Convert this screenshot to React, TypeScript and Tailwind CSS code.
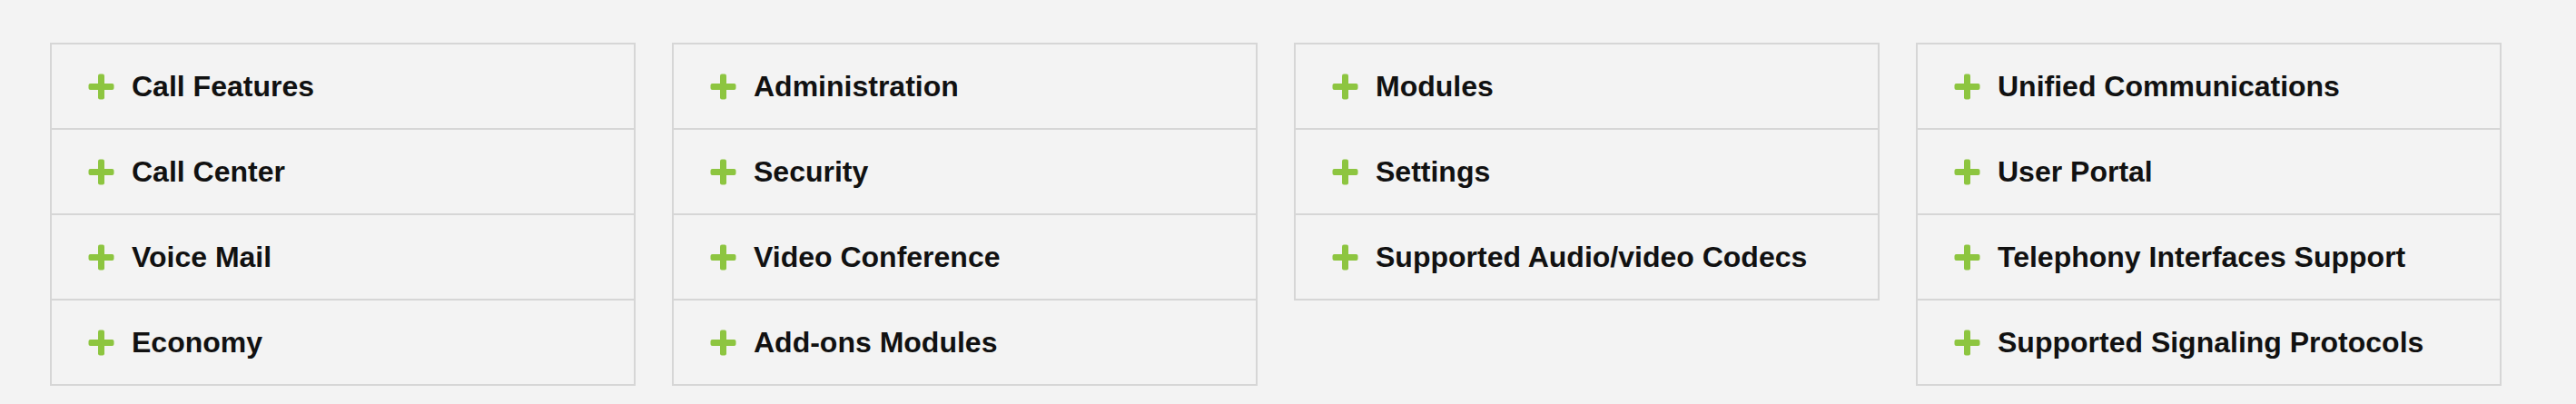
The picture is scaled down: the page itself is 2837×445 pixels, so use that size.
const columns = [
  ["Call Features", "Call Center", "Voice Mail", "Economy"],
  ["Administration", "Security", "Video Conference", "Add-ons Modules"],
  ["Modules", "Settings", "Supported Audio/video Codecs"],
  [
    "Unified Communications",
    "User Portal",
    "Telephony Interfaces Support",
    "Supported Signaling Protocols",
  ],
];

function Plus() {
  return (
    <svg width="29" height="29" viewBox="0 0 29 29" className="shrink-0">
      <rect x="11" y="0.5" width="7" height="28" rx="2" fill="#8dc540" />
      <rect x="0.5" y="11" width="28" height="7" rx="2" fill="#8dc540" />
    </svg>
  );
}

export default function App() {
  return (
    <div className="w-[2837px] h-[445px] bg-[#f3f3f3] pt-[47px] pl-[55px] font-['Liberation_Sans',Arial,sans-serif]">
      <div className="flex items-start gap-[40px]">
        {columns.map((items, i) => (
          <div key={i} className="w-[645px] border-2 border-[#d6d6d6]">
            {items.map((label, j) => (
              <div
                key={label}
                className={
                  "flex items-center gap-[19px] pl-[40px] " +
                  (j < items.length - 1
                    ? "h-[94px] border-b-2 border-[#d6d6d6]"
                    : "h-[92px]")
                }
              >
                <Plus />
                <span className="text-[32px] font-bold text-[#111] leading-none">
                  {label}
                </span>
              </div>
            ))}
          </div>
        ))}
      </div>
    </div>
  );
}
